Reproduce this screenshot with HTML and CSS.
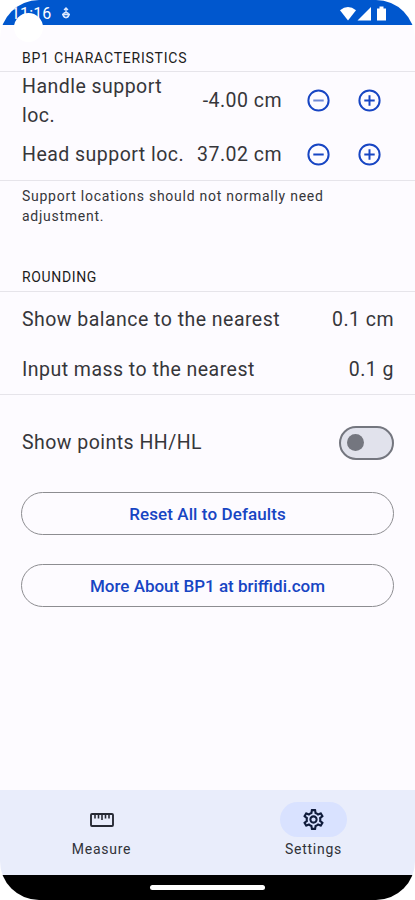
FILE: index.html
```html
<!DOCTYPE html>
<html lang="en">
<head>
<meta charset="utf-8">
<title>BP1 Settings</title>
<link rel="stylesheet" href="styles.css">
</head>
<body>
<div class="phone">
  <header class="status">
    <span class="clock">11:16</span>
    <svg class="sync" width="10" height="14" viewBox="0 0 10 14" fill="none" stroke="#dbe8ff" stroke-width="1.3"><path d="M5 1v5M3 3l2-2 2 2M1 7.5h8M2 6.5C2 12 8 12 8 6.5"/><circle cx="5" cy="8" r="2.5"/></svg>
    <svg class="signals" width="48" height="16" viewBox="0 0 48 16" fill="#fff"><path d="M0 4.2Q8-2 16 4.2L8 14.5Z"/><path d="M17.5 14.5 31 1v13.500Z"/><path d="M37 2.500h2.500V.5h4v2H46v12h-9Z"/></svg>
    <span class="camera"></span>
  </header>
  <main>
    <h2 class="heading first">BP1 CHARACTERISTICS</h2>
    <section class="group">
      <div class="row handle">
        <span class="label">Handle support loc.</span><span class="value">-4.00 cm</span>
        <svg class="icon" viewBox="0 0 24 24"><circle cx="12" cy="12" r="9.700"/><path class="faint" d="M7 12h10"/></svg>
        <svg class="icon" viewBox="0 0 24 24"><circle cx="12" cy="12" r="9.700"/><path d="M7 12h10M12 7v10"/></svg>
      </div>
      <div class="row head">
        <span class="label">Head support loc.</span><span class="value">37.02 cm</span>
        <svg class="icon" viewBox="0 0 24 24"><circle cx="12" cy="12" r="9.700"/><path d="M7 12h10"/></svg>
        <svg class="icon" viewBox="0 0 24 24"><circle cx="12" cy="12" r="9.700"/><path d="M7 12h10M12 7v10"/></svg>
      </div>
    </section>
    <p class="note">Support locations should not normally need adjustment.</p>
    <h2 class="heading rounding">ROUNDING</h2>
    <section class="group">
      <div class="row pick"><span>Show balance to the nearest</span><span class="end">0.1 cm</span></div>
      <div class="row pick"><span>Input mass to the nearest</span><span class="end">0.1 g</span></div>
    </section>
    <div class="row points"><span>Show points HH/HL</span><span class="switch"><span class="thumb"></span></span></div>
    <button class="btn reset">Reset All to Defaults</button>
    <button class="btn more">More About BP1 at briffidi.com</button>
  </main>
  <nav>
    <div class="tab"><span class="pill"><svg width="24" height="14" viewBox="0 0 24 14" fill="none" stroke="#272a34" stroke-width="1.900"><rect x="1" y="1" width="22" height="12" rx="1"/><path stroke-width="1.600" d="M5 1v4.500M8.500 1v4.500M12 1v6M15.500 1v4.500M19 1v4.500"/></svg></span><span class="t-measure">Measure</span></div>
    <div class="tab"><span class="pill on"><svg width="25" height="25" viewBox="0 0 24 24" fill="#101c3c"><path d="M19.430 12.980c.04-.32.070-.64.070-.98s-.03-.66-.07-.98l2.110-1.650c.19-.15.24-.42.120-.64l-2-3.460c-.09-.16-.26-.25-.44-.25-.06 0-.12.010-.17.030l-2.490 1c-.52-.4-1.080-.73-1.690-.98l-.38-2.650A.488.488 0 0 0 14 2h-4c-.25 0-.46.180-.49.420l-.38 2.650c-.61.250-1.170.590-1.690.980l-2.490-1a.566.566 0 0 0-.18-.03c-.17 0-.34.090-.43.250l-2 3.460c-.13.220-.07.490.120.640l2.110 1.650c-.04.320-.07.650-.07.980s.03.660.070.980l-2.110 1.650c-.19.150-.24.420-.12.640l2 3.460c.09.160.26.250.44.250.06 0 .12-.01.170-.03l2.490-1c.52.400 1.080.730 1.690.980l.38 2.650c.03.240.24.420.49.420h4c.25 0 .46-.18.490-.42l.38-2.650c.61-.25 1.170-.59 1.690-.98l2.490 1c.06.020.12.030.18.030.17 0 .34-.09.430-.25l2-3.460c.12-.22.070-.49-.12-.64l-2.110-1.650zm-1.980-1.710c.04.310.05.520.05.730s-.02.430-.05.730l-.14 1.130.89.700 1.080.84-.7 1.210-1.270-.51-1.040-.42-.9.680c-.43.320-.84.560-1.250.730l-1.060.43-.16 1.130-.2 1.350h-1.400l-.19-1.350-.16-1.130-1.060-.43c-.43-.18-.83-.41-1.230-.71l-.91-.7-1.060.43-1.270.51-.7-1.210 1.080-.84.89-.7-.14-1.130c-.03-.31-.05-.54-.05-.74s.02-.43.050-.73l.14-1.130-.89-.7-1.080-.84.700-1.210 1.270.510 1.040.420.900-.68c.43-.32.840-.56 1.250-.73l1.060-.43.160-1.130.2-1.350h1.390l.19 1.350.16 1.130 1.060.43c.43.180.83.410 1.230.710l.91.700 1.060-.43 1.270-.51.700 1.210-1.070.85-.89.700.14 1.130zM12 8c-2.210 0-4 1.790-4 4s1.790 4 4 4 4-1.790 4-4-1.790-4-4-4zm0 6c-1.100 0-2-.9-2-2s.9-2 2-2 2 .9 2 2-.9 2-2 2z"/></svg></span><span class="t-settings">Settings</span></div>
  </nav>
  <footer><span class="grip"></span></footer>
</div>
</body>
</html>
```
FILE: styles.css
```css
* { box-sizing: border-box; }
body { margin: 0; background: #fff; font-family: Roboto, "Liberation Sans", sans-serif; color: #36363a; }
.phone { width: 415px; height: 900px; display: flex; flex-direction: column; overflow: hidden; border-radius: 39px; background: #fdfbff; }
.status { position: relative; height: 25px; flex: none; background: #0057ce; display: flex; align-items: center; padding: 2px 27px 0 11px; color: #fff; }
.clock { font-size: 16px; letter-spacing: .1px; font-weight: 400; width: 50px; }
.signals { margin-left: auto; }
.camera { position: absolute; left: 14px; top: 13px; width: 29px; height: 29px; border-radius: 50%; background: #fff; }
main { flex: 1; }
.heading { margin: 0; padding-left: 22px; font-size: 14px; font-weight: 400; letter-spacing: .78px; line-height: 20px; color: #1c1c20; }
.first { padding-top: 23px; height: 46px; }
.group { border-top: 1.500px solid #e6e4ea; border-bottom: 1.500px solid #e6e4ea; }
.row { display: flex; align-items: center; padding: 0 21px 0 22px; font-size: 19.500px; letter-spacing: .47px; }
.handle { height: 57px; line-height: 29px; }
.head { height: 51px; }
.label { width: 165px; white-space: normal; }
.handle .label { padding-right: 15px; }
.head .label { white-space: nowrap; }
.value { width: 95px; text-align: right; white-space: nowrap; }
.icon { width: 25px; height: 25px; margin-left: 24px; fill: none; stroke: #1745c3; stroke-width: 1.900; flex: none; }
.icon + .icon { margin-left: 26px; }
.faint { stroke: #7189d5; }
.note { margin: 0; padding: 5px 70px 0 22px; height: 86px; font-size: 14px; letter-spacing: .74px; line-height: 20px; }
.rounding { height: 24px; letter-spacing: .65px; }
.pick { height: 51px; justify-content: space-between; padding-top: 3px; }
.pick + .pick { padding-top: 2px; }
.points { height: 95px; justify-content: space-between; }
.switch { width: 55px; height: 34px; border: 2px solid #74767f; border-radius: 17px; background: #e1e2ec; display: flex; align-items: center; padding-left: 6px; }
.thumb { width: 17px; height: 17px; border-radius: 50%; background: #74767f; }
.btn { display: block; width: 373px; height: 43px; margin: 2px 0 0 21px; padding: 0; border: 1px solid #8d8d91; border-radius: 22px; background: transparent; color: #1745c3; font: 500 17px Roboto, sans-serif; letter-spacing: 0; }
.reset { letter-spacing: .1px; }
.more { margin-top: 29px; }
nav { height: 85px; flex: none; background: #e9edfb; display: grid; grid-template-columns: 203px 212px; padding-top: 12px; }
.tab { display: flex; flex-direction: column; align-items: center; font-size: 14px; font-weight: 400; letter-spacing: .75px; line-height: 20px; color: #303238; }
.tab + .tab { margin-left: 8px; width: 205px; }
.pill { width: 67px; height: 35px; margin-bottom: 2px; border-radius: 18px; display: flex; align-items: center; justify-content: center; }
.on { background: #d9e2ff; }
footer { height: 25px; flex: none; background: #000; display: flex; justify-content: center; padding-top: 10px; }
.grip { width: 115px; height: 5px; border-radius: 3px; background: #fff; }
```
